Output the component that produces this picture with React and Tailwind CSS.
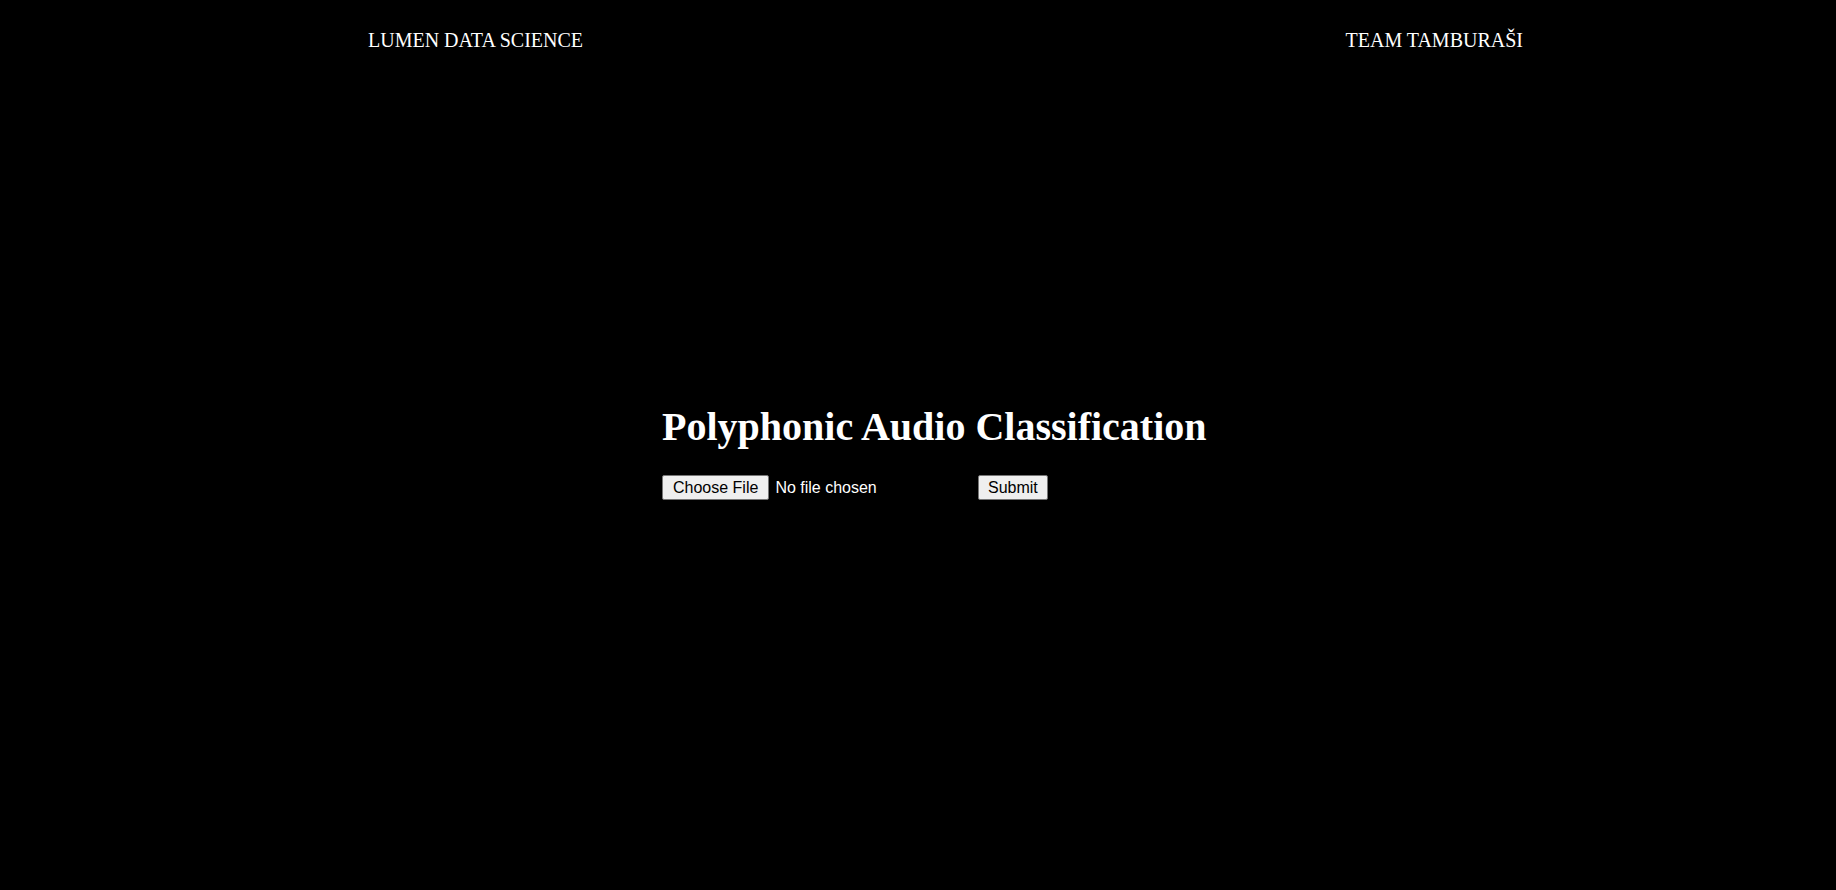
export default function App() {
  return (
    <div className="min-h-screen bg-black text-white font-['Liberation_Serif','Times_New_Roman',serif]">
      <header className="flex h-[52px] pt-[29px] pl-[368px] pr-[313px] text-[20px] leading-[22px]">
        <span>LUMEN DATA SCIENCE</span>
        <span className="ml-auto">TEAM TAMBURAŠI</span>
      </header>

      <main className="mx-auto w-[512px] pt-[353px]">
        <h1 className="text-[40px] font-bold leading-[44px] whitespace-nowrap">Polyphonic Audio Classification</h1>
        <form className="mt-[26px] flex items-center font-['Liberation_Sans',Arial,sans-serif] text-[16px] leading-[19px]" onSubmit={e => e.preventDefault()}>
          <input
            type="file"
            className="w-[316px] text-white file:mr-[6px] file:h-[25px] file:px-[10px] file:rounded-[2px] file:border file:border-[#767676] file:bg-[#efefef] file:text-black"
          />
          <button type="submit" className="h-[25px] px-[9px] rounded-[2px] border border-[#767676] bg-[#efefef] text-black">
            Submit
          </button>
        </form>
      </main>
    </div>
  );
}
